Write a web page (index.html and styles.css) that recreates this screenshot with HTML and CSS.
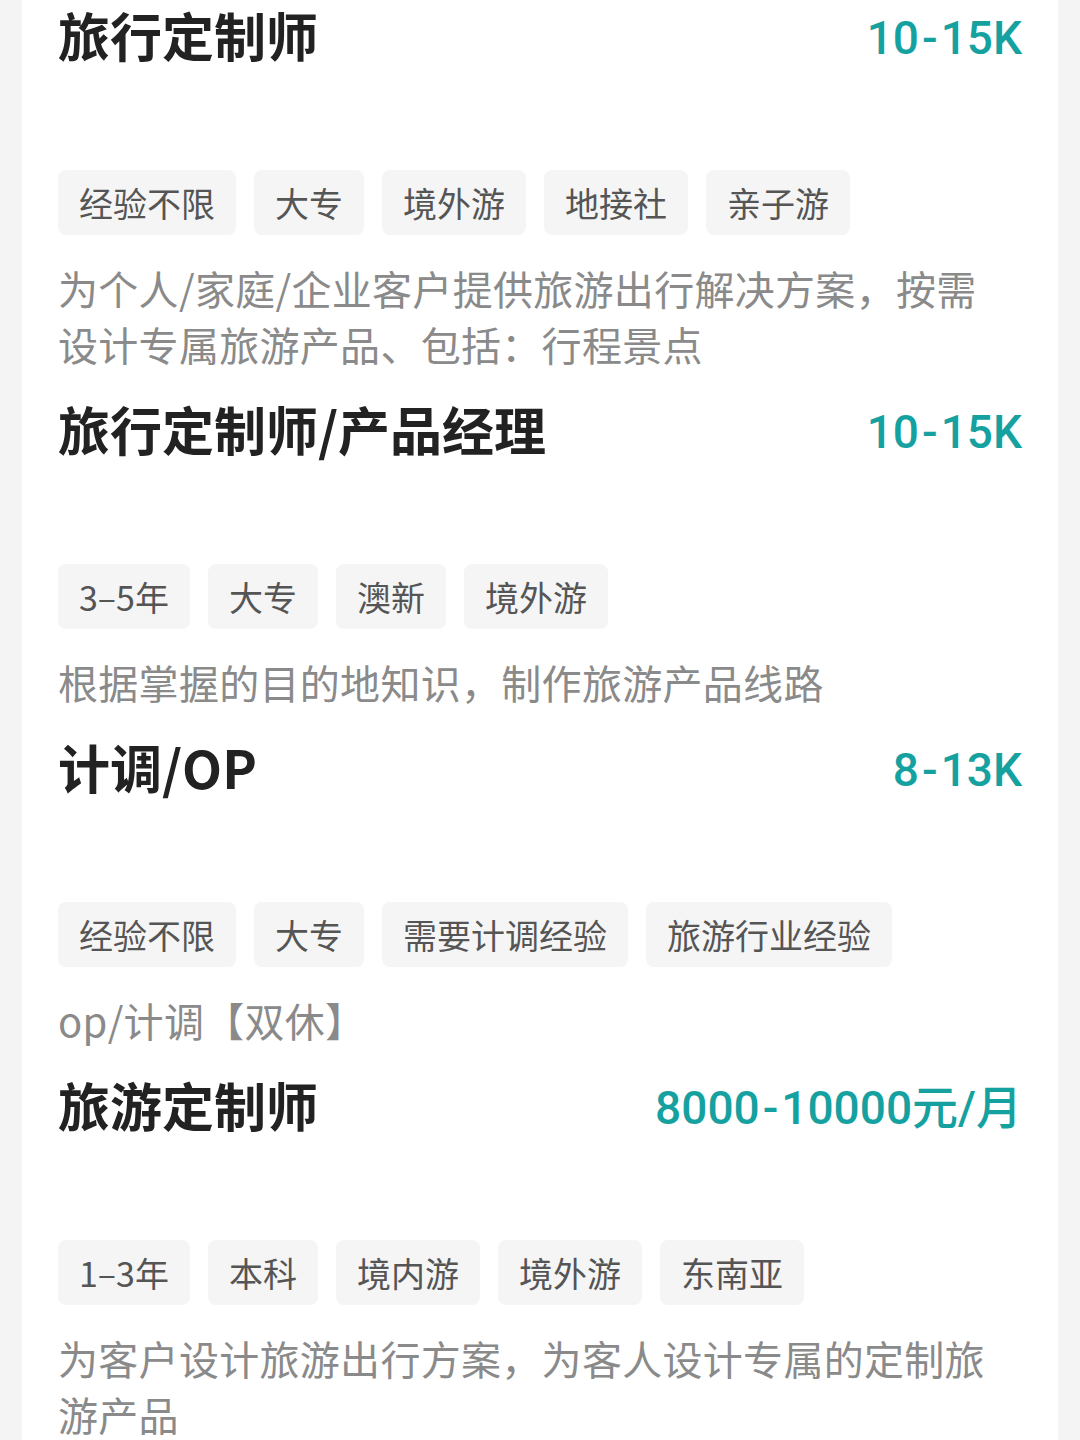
FILE: index.html
```html
<!DOCTYPE html>
<html lang="zh-CN">
<head>
<meta charset="utf-8">
<link rel="stylesheet" href="styles.css">
</head>
<body>
<div class="card">
  <div class="job">
    <div class="job-head">
      <div class="job-title">旅行定制师</div>
      <div class="job-salary">10<span class="dash">-</span>15K</div>
    </div>
    <div class="job-gap"></div>
    <div class="tags">
      <span class="tag">经验不限</span>
      <span class="tag">大专</span>
      <span class="tag">境外游</span>
      <span class="tag">地接社</span>
      <span class="tag">亲子游</span>
    </div>
    <p class="job-desc">为个人/家庭/企业客户提供旅游出行解决方案，按需设计专属旅游产品、包括：行程景点</p>
  </div>
  <div class="job">
    <div class="job-head">
      <div class="job-title">旅行定制师/产品经理</div>
      <div class="job-salary">10<span class="dash">-</span>15K</div>
    </div>
    <div class="job-gap"></div>
    <div class="tags">
      <span class="tag">3–5年</span>
      <span class="tag">大专</span>
      <span class="tag">澳新</span>
      <span class="tag">境外游</span>
    </div>
    <p class="job-desc">根据掌握的目的地知识，制作旅游产品线路</p>
  </div>
  <div class="job">
    <div class="job-head">
      <div class="job-title">计调/OP</div>
      <div class="job-salary">8<span class="dash">-</span>13K</div>
    </div>
    <div class="job-gap"></div>
    <div class="tags">
      <span class="tag">经验不限</span>
      <span class="tag">大专</span>
      <span class="tag">需要计调经验</span>
      <span class="tag">旅游行业经验</span>
    </div>
    <p class="job-desc">op/计调【双休】</p>
  </div>
  <div class="job">
    <div class="job-head">
      <div class="job-title">旅游定制师</div>
      <div class="job-salary">8000<span class="dash">-</span>10000元/月</div>
    </div>
    <div class="job-gap"></div>
    <div class="tags">
      <span class="tag">1–3年</span>
      <span class="tag">本科</span>
      <span class="tag">境内游</span>
      <span class="tag">境外游</span>
      <span class="tag">东南亚</span>
    </div>
    <p class="job-desc">为客户设计旅游出行方案，为客人设计专属的定制旅游产品</p>
  </div>
</div>
</body>
</html>
```

FILE: styles.css
```css
html, body {
  margin: 0;
  padding: 0;
  background: #f4f4f4;
}
body {
  font-family: "Noto Sans CJK SC", "Noto Sans", sans-serif;
  padding: 0 22px;
  height: 1440px;
  overflow: hidden;
}
.card {
  background: #ffffff;
  padding: 0 36px;
  min-height: 1440px;
}
.job {
  padding-bottom: 22px;
}
.job-head {
  display: flex;
  justify-content: space-between;
  align-items: center;
  height: 70px;
}
.job-title {
  font-size: 52px;
  font-weight: 700;
  color: #222222;
  line-height: 70px;
}
.job-salary {
  font-family: Roboto, "Noto Sans CJK SC", sans-serif;
  font-size: 46px;
  font-weight: 500;
  color: #16a1a1;
  line-height: 70px;
  padding-top: 6px;
}
.dash {
  padding: 0 3px;
}
.job-gap {
  height: 100px;
}
.tags {
  display: flex;
  gap: 18px;
}
.tag {
  height: 65px;
  line-height: 65px;
  padding: 0 21px;
  background: #f5f5f5;
  border-radius: 8px;
  font-size: 34px;
  color: #555555;
}
.job-desc {
  margin: 25px 0 0;
  max-width: 940px;
  font-size: 40px;
  letter-spacing: 0.3px;
  line-height: 56px;
  color: #8a8a8a;
}
```
